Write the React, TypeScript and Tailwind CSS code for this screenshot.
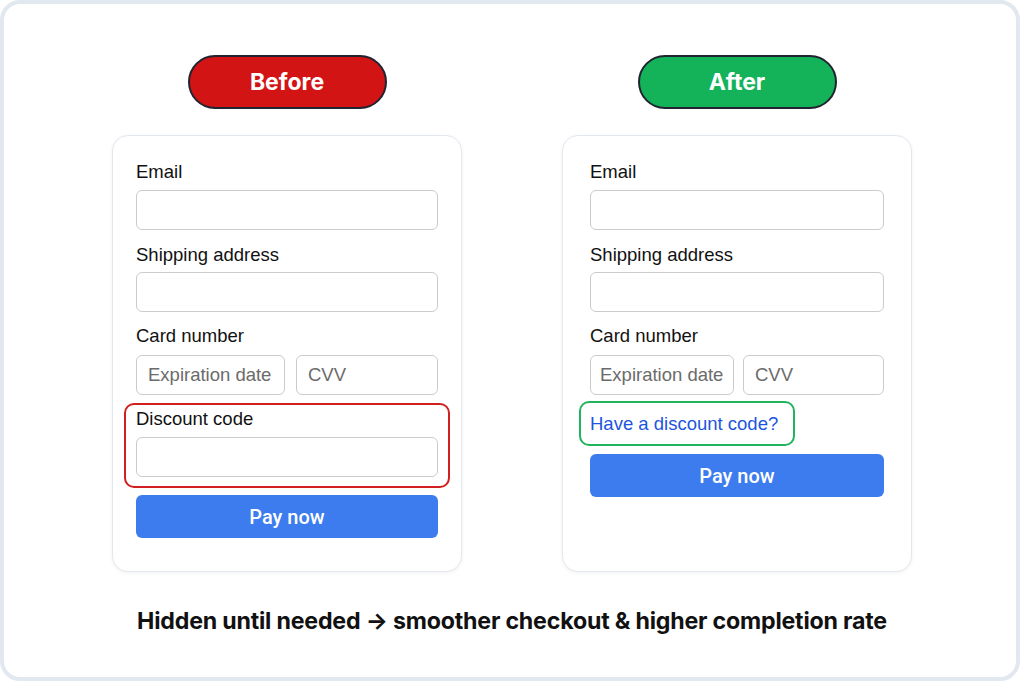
import React from "react";

// Checkout form comparison: cluttered vs. progressive-disclosure discount field

const ui = { fontFamily: '"Liberation Sans", Arial, sans-serif' };
const display = { fontFamily: 'Inter, "Noto Sans", sans-serif' };

function Label({ children }: { children: React.ReactNode }) {
  return (
    <div className="text-[18.5px] leading-[22px] text-[#111]">{children}</div>
  );
}

function Field({ placeholder, className = "" }: { placeholder?: string; className?: string }) {
  return (
    <div
      className={`h-10 rounded-[6px] border border-[#cbcbcb] bg-white px-[11px] flex items-center whitespace-nowrap overflow-hidden text-[18.5px] text-[#6b6b6b] ${className}`}
    >
      {placeholder}
    </div>
  );
}

function Pill({ label, color }: { label: string; color: string }) {
  return (
    <div
      className={`w-[199px] h-[54px] rounded-full border-2 border-[#1f2430] ${color} flex items-center justify-center text-white text-[23px] font-bold`}
      style={display}
    >
      {label}
    </div>
  );
}

function PayButton() {
  return (
    <button
      className="h-[43px] rounded-[6px] bg-[#3d7cef] text-white text-[20px] font-medium"
      style={{ fontFamily: 'Roboto, "Liberation Sans", sans-serif' }}
    >
      Pay now
    </button>
  );
}

function BeforeCard() {
  return (
    <div className="w-[350px] h-[437px] rounded-[16px] border border-[#e3e8ef] bg-white shadow-[0_1px_4px_rgba(15,23,42,0.06)] px-[23px] pt-[25px] flex flex-col" style={ui}>
      <Label>Email</Label>
      <Field className="mt-[7px]" />
      <div className="mt-[14px]">
        <Label>Shipping address</Label>
      </div>
      <Field className="mt-[6px]" />
      <div className="mt-[13px]">
        <Label>Card number</Label>
      </div>
      <div className="mt-[8px] flex gap-[11px]">
        <Field placeholder="Expiration date" className="w-[149px]" />
        <Field placeholder="CVV" className="flex-1" />
      </div>
      <div className="mt-[8px] mb-[7px] -mx-3 rounded-[10px] border-2 border-[#d21f1f] px-[10px] pt-[3px] pb-[9px]">
        <Label>Discount code</Label>
        <Field className="mt-[7px]" />
      </div>
      <PayButton />
    </div>
  );
}

function AfterCard() {
  return (
    <div className="w-[350px] h-[437px] rounded-[16px] border border-[#e3e8ef] bg-white shadow-[0_1px_4px_rgba(15,23,42,0.06)] px-[27px] pt-[25px] flex flex-col" style={ui}>
      <Label>Email</Label>
      <Field className="mt-[7px]" />
      <div className="mt-[14px]">
        <Label>Shipping address</Label>
      </div>
      <Field className="mt-[6px]" />
      <div className="mt-[13px]">
        <Label>Card number</Label>
      </div>
      <div className="mt-[8px] flex gap-[9px]">
        <Field placeholder="Expiration date" className="w-[144px] !px-[9px]" />
        <Field placeholder="CVV" className="flex-1" />
      </div>
      <div className="mt-[6px] mb-[8px] -ml-[11px] self-start w-[216px] h-[45px] rounded-[10px] border-2 border-[#22b35e] px-[9px] flex items-center text-[18.5px] text-[#1d55de]">
        Have a discount code?
      </div>
      <PayButton />
    </div>
  );
}

export default function App() {
  return (
    <div className="w-[1024px] h-[684px] bg-white">
      <div className="w-[1020px] h-[681px] rounded-[20px] border-4 border-[#e2e8f0] bg-white flex flex-col items-center pt-[51px] pl-[4px]">
        <div className="flex gap-[100px]">
          <div className="flex flex-col items-center gap-[26px]">
            <Pill label="Before" color="bg-[#d21414]" />
            <BeforeCard />
          </div>
          <div className="flex flex-col items-center gap-[26px]">
            <Pill label="After" color="bg-[#14b35a]" />
            <AfterCard />
          </div>
        </div>
        <div className="mt-[32px] text-[23.2px] font-bold text-[#111] tracking-[-0.2px]" style={display}>
          Hidden until needed → smoother checkout &amp; higher completion rate
        </div>
      </div>
    </div>
  );
}
